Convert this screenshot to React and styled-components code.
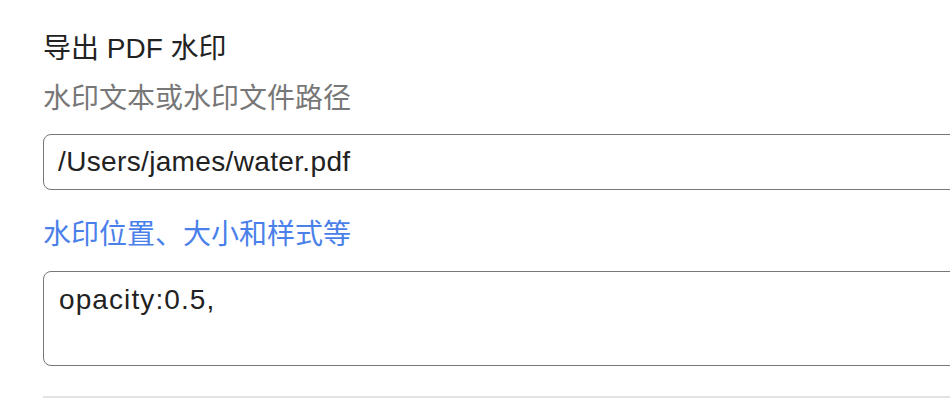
import styled, { createGlobalStyle } from "styled-components";

const GlobalStyle = createGlobalStyle`
  html, body {
    margin: 0;
    padding: 0;
    background: #fff;
    overflow: hidden;
  }
  body {
    font-family: "Liberation Sans", "Noto Sans CJK SC", sans-serif;
  }
`;

const Page = styled.div`
  width: 950px;
  height: 408px;
  overflow: hidden;
  padding: 0 0 0 43px;
  box-sizing: border-box;
`;

const Section = styled.div`
  width: 960px;
  padding-top: 32px;
  display: flex;
  flex-direction: column;
`;

const Title = styled.div`
  font-size: 28px;
  line-height: 34px;
  color: #222;
`;

const Label = styled.div`
  font-size: 28px;
  line-height: 34px;
  margin-top: ${(p) => p.$gap}px;
  color: ${(p) => (p.$accent ? "#4a80ea" : "#777")};
`;

const Input = styled.input`
  box-sizing: border-box;
  margin-top: 18px;
  height: 56px;
  width: 100%;
  border: 1px solid #777;
  border-radius: 8px;
  padding: 0 14px;
  font: inherit;
  font-size: 28px;
  letter-spacing: 0.35px;
  color: #222;
  outline: none;
`;

const TextArea = styled.textarea`
  box-sizing: border-box;
  margin-top: 19px;
  height: 95px;
  width: 100%;
  border: 1px solid #777;
  border-radius: 8px;
  padding: 11px 15px;
  font: inherit;
  font-size: 28px;
  line-height: 34px;
  letter-spacing: 1.1px;
  color: #222;
  resize: none;
  outline: none;
`;

const Divider = styled.div`
  margin-top: 30px;
  height: 2px;
  background: #e3e3e3;
`;

export default function App() {
  return (
    <Page>
      <GlobalStyle />
      <Section>
        <Title>导出 PDF 水印</Title>
        <Label $gap={16}>水印文本或水印文件路径</Label>
        <Input defaultValue="/Users/james/water.pdf" />
        <Label $gap={28} $accent>
          水印位置、大小和样式等
        </Label>
        <TextArea defaultValue="opacity:0.5," />
        <Divider />
      </Section>
    </Page>
  );
}
